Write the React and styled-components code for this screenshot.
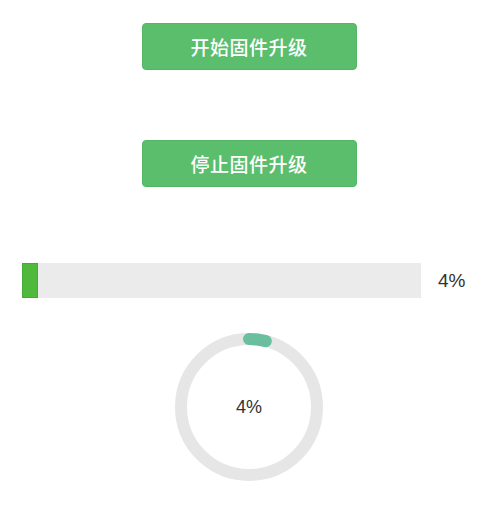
import React from "react";
import styled, { createGlobalStyle } from "styled-components";

const GlobalStyle = createGlobalStyle`
  body {
    margin: 0;
    background: #ffffff;
    font-family: "Liberation Sans", "Noto Sans CJK SC", sans-serif;
  }
`;

const Page = styled.div`
  width: 500px;
  display: flex;
  flex-direction: column;
  align-items: center;
  padding-top: 23px;
`;

const ActionButton = styled.button`
  width: 215px;
  height: 47px;
  margin-bottom: ${(p) => p.$gap}px;
  border: 1px solid #52b665;
  border-radius: 4px;
  background: #5abe6d;
  color: #ffffff;
  font-family: "Noto Sans CJK SC", sans-serif;
  font-size: 19px;
  font-weight: 500;
  letter-spacing: 0.5px;
  cursor: pointer;
  margin-left: -2px;
`;

const BarRow = styled.div`
  align-self: stretch;
  display: flex;
  align-items: center;
  padding-left: 22px;
  gap: 17px;
`;

const Track = styled.div`
  width: 399px;
  height: 35px;
  background: #ebebeb;
`;

const Fill = styled.div`
  height: 100%;
  background: #4fb93b;
  border: 1px solid #46a836;
  box-sizing: border-box;
`;

const Label = styled.span`
  font-family: "Liberation Sans", sans-serif;
  font-size: 19px;
  color: #333333;
`;

const Ring = styled.div`
  position: relative;
  width: 150px;
  height: 150px;
  margin-top: 34px;
  margin-left: -2px;
`;

const RingText = styled(Label)`
  position: absolute;
  inset: 0;
  display: flex;
  align-items: center;
  justify-content: center;
  font-size: 18px;
`;

export default function App() {
  const percent = 4;
  const r = 68;
  const c = 2 * Math.PI * r;
  return (
    <>
      <GlobalStyle />
      <Page>
        <ActionButton $gap={70}>开始固件升级</ActionButton>
        <ActionButton $gap={76}>停止固件升级</ActionButton>
        <BarRow>
          <Track>
            <Fill style={{ width: `${percent}%` }} />
          </Track>
          <Label>{percent}%</Label>
        </BarRow>
        <Ring>
          <svg width="150" height="150" viewBox="0 0 150 150">
            <defs>
              <linearGradient id="arc" x1="0" y1="0" x2="1" y2="0">
                <stop offset="0" stopColor="#5aaa9e" />
                <stop offset="1" stopColor="#69bf9e" />
              </linearGradient>
            </defs>
            <circle cx="75" cy="75" r={r} fill="none" stroke="#e6e6e6" strokeWidth="12" />
            <circle
              cx="75"
              cy="75"
              r={r}
              fill="none"
              stroke="url(#arc)"
              strokeWidth="12"
              strokeLinecap="round"
              strokeDasharray={`${(c * percent) / 100} ${c}`}
              transform="rotate(-90 75 75)"
            />
          </svg>
          <RingText>{percent}%</RingText>
        </Ring>
      </Page>
    </>
  );
}
